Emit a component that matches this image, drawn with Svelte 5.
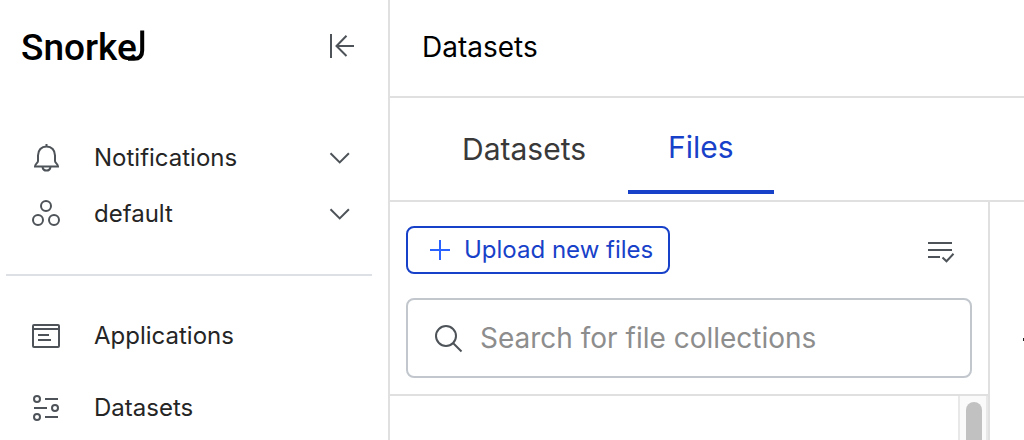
<script>
  let query = $state('');
</script>

{#snippet chevron()}
  <svg class="chevron" width="24" height="24" viewBox="0 0 24 24" aria-hidden="true"><path d="M2.500 7.200 11.700 16.400 20.900 7.200" /></svg>
{/snippet}

<div class="app">
  <aside class="sidebar">
    <div class="brand">
      <svg class="logo" width="132" height="48" viewBox="0 0 132 48" role="img" aria-label="Snorkel">
        <text x="-1" y="38">Snorke</text>
        <path d="M106 36.800h6Q120.200 36.800 120.200 28.500V8.500" />
      </svg>
      <button class="plain" aria-label="Collapse sidebar">
        <svg width="28" height="28" viewBox="0 0 28 28"><path d="M4 2v24M27 14H9M19.500 3.800 9.500 14l10 10" /></svg>
      </button>
    </div>

    <div class="account">
      <button class="row">
        <svg width="32" height="32" viewBox="0 0 32 32"><path d="M16.500 2v3M16.500 4.500c-5.200 0-8.500 3.800-8.500 9v5.500c0 2-3 3-3 5.500h23c0-2.500-3-3.500-3-5.500v-5.500c0-5.200-3.300-9-8.500-9zM12.500 25c.7 4.800 7.300 4.800 8 0" /></svg>
        <span>Notifications</span>
        {@render chevron()}
      </button>
      <button class="row">
        <svg width="32" height="32" viewBox="0 0 32 32"><circle cx="16" cy="8" r="5" /><circle cx="8" cy="22" r="5" /><circle cx="24" cy="22" r="5" /></svg>
        <span>default</span>
        {@render chevron()}
      </button>
    </div>

    <nav>
      <a class="row" href="#applications">
        <svg width="32" height="32" viewBox="0 0 32 32"><rect x="3" y="5" width="26" height="22" rx="1" /><path d="M3 9h26M8 15h11M8 20h13" /></svg>
        <span>Applications</span>
      </a>
      <a class="row" href="#datasets">
        <svg width="32" height="32" viewBox="0 0 32 32"><circle cx="7" cy="7" r="3" /><circle cx="25" cy="16" r="3" /><circle cx="7" cy="25" r="3" /><path d="M15 7h13M4 16h13M15 25h13" /></svg>
        <span>Datasets</span>
      </a>
    </nav>
  </aside>

  <main>
    <header><h1>Datasets</h1></header>
    <div class="tabs">
      <a class="tab" href="#datasets">Datasets</a>
      <a class="tab active" href="#files" aria-current="page">Files</a>
    </div>
    <div class="content">
      <section class="files">
        <div class="tools">
          <div class="actions">
            <button class="upload">
              <svg width="24" height="24" viewBox="0 0 24 24" aria-hidden="true"><path d="M2 12h20M12 2v20" /></svg>
              <span>Upload new files</span>
            </button>
            <button class="plain" aria-label="Select collections">
              <svg width="32" height="32" viewBox="0 0 32 32"><path d="M4 9h24M4 16h24M4 23h12M18.500 23.500l4 3.800 7-7.500" /></svg>
            </button>
          </div>
          <label class="search">
            <svg width="32" height="32" viewBox="0 0 32 32" aria-hidden="true"><circle cx="14" cy="14" r="10" /><path d="m21 21 8.500 8.500" /></svg>
            <input type="text" aria-label="Search for file collections" placeholder="Search for file collections" bind:value={query} />
          </label>
        </div>
        <div class="list">
          <div class="track"><div class="thumb"></div></div>
        </div>
      </section>
      <section class="detail">
        <span class="dash"></span>
      </section>
    </div>
  </main>
</div>

<style>
  :global(body) { margin: 0; background: #fff; }
  .app {
    display: flex;
    height: 100vh;
    overflow: hidden;
    font-family: Inter, "Liberation Sans", sans-serif;
    color: #252525;
  }
  svg { flex: none; display: block; fill: none; stroke: #4d5358; stroke-width: 2; }
  button { font: inherit; color: inherit; background: none; border: 0; padding: 0; cursor: pointer; }
  a { color: inherit; text-decoration: none; }

  .sidebar { flex: none; width: 388px; border-right: 2px solid #e0e0e0; }
  .brand { display: flex; justify-content: space-between; align-items: center; height: 92px; padding: 0 33px 0 22px; }
  .logo { overflow: visible; stroke: none; }
  .logo text { font: 600 37px Roboto, sans-serif; font-weight: 500; fill: #000; stroke: none; }
  .logo path { stroke: #000; stroke-width: 4; }
  .row {
    display: flex;
    align-items: center;
    gap: 32px;
    box-sizing: border-box;
    width: 100%;
    height: 56px;
    padding: 0 36px 0 30px;
    font-size: 24px;
    text-align: left;
  }
  .row span { flex: 1; padding-bottom: 2px; }
  .account { padding: 38px 0 32px; }
  nav { display: flex; flex-direction: column; gap: 16px; padding-top: 34px; position: relative; }
  nav::before { content: ""; position: absolute; top: 0; left: 6px; right: 16px; height: 2px; background: #dde1e6; }

  main { flex: 1; min-width: 0; display: flex; flex-direction: column; }
  header { display: flex; align-items: center; height: 96px; padding: 0 32px; border-bottom: 2px solid #e0e0e0; }
  h1 { margin: 0; padding-bottom: 2px; font-size: 28px; font-weight: 400; color: #000; }
  .tabs { display: flex; gap: 2px; height: 102px; padding: 0 32px; border-bottom: 2px solid #e0e0e0; font-size: 30px; color: #393939; }
  .tab { height: 96px; box-sizing: border-box; padding: 31px 40px; line-height: 40px; }
  .active { padding-top: 29px; border-bottom: 4px solid #1841c9; color: #1841c9; }
  .content { flex: 1; min-height: 0; display: flex; }
  .files { flex: none; width: 598px; border-right: 2px solid #e0e0e0; display: flex; flex-direction: column; }
  .tools { padding: 24px 16px 16px; border-bottom: 2px solid #e0e0e0; }
  .actions { display: flex; justify-content: space-between; align-items: center; margin-bottom: 24px; padding-right: 16px; }
  .upload {
    display: flex;
    align-items: center;
    gap: 12px;
    height: 48px;
    padding: 0 15px 0 20px;
    border: 2px solid #1841c9;
    border-radius: 8px;
    font-size: 24px;
    color: #1841c9;
  }
  .upload span { padding-bottom: 2px; }
  .upload svg { stroke: #2962ff; }
  .search {
    display: flex;
    align-items: center;
    gap: 16px;
    height: 76px;
    padding: 0 24px;
    border: 2px solid #c1c7cd;
    border-radius: 8px;
  }
  input { flex: 1; min-width: 0; border: 0; outline: 0; padding: 0; background: none; font: inherit; font-size: 28px; }
  input::placeholder { color: #8d8d8d; opacity: 1; }
  .list { flex: 1; display: flex; justify-content: flex-end; }
  .track { display: flex; width: 16px; padding: 6px 4px 0 6px; border: solid #e8e8e8; border-width: 0 2px; background: #fafafa; }
  .thumb { flex: 1; border-radius: 8px 8px 0 0; background: #c1c1c1; }
  .detail { flex: 1; overflow: hidden; padding: 136px 0 0 33px; }
  .dash { display: block; width: 16px; height: 3px; background: #222; }
</style>
